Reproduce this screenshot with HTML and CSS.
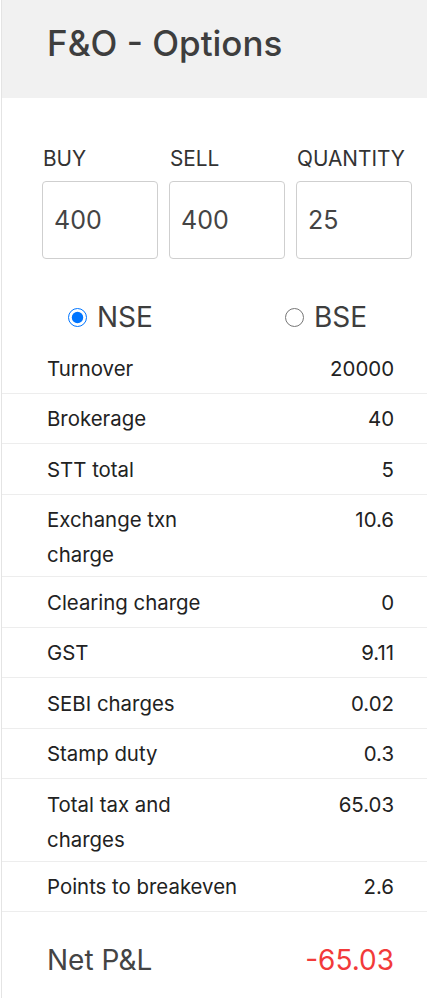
FILE: index.html
```html
<!DOCTYPE html>
<html>
<head>
<meta charset="utf-8">
<link rel="stylesheet" href="styles.css">
</head>
<body>
<div class="page">
  <div class="header"><h1 class="title">F&amp;O - Options</h1></div>
  <div class="inputs">
    <label class="field"><span class="field-label">BUY</span><input class="field-input" type="text" value="400"></label>
    <label class="field"><span class="field-label">SELL</span><input class="field-input" type="text" value="400"></label>
    <label class="field"><span class="field-label">QUANTITY</span><input class="field-input" type="text" value="25"></label>
  </div>
  <div class="exchanges">
    <label class="radio radio-nse"><input type="radio" name="ex" checked><span>NSE</span></label>
    <label class="radio radio-bse"><input type="radio" name="ex"><span>BSE</span></label>
  </div>
  <table class="charges">
    <tr><td class="name">Turnover</td><td class="val">20000</td></tr>
    <tr><td class="name">Brokerage</td><td class="val">40</td></tr>
    <tr><td class="name">STT total</td><td class="val">5</td></tr>
    <tr><td class="name">Exchange txn charge</td><td class="val">10.6</td></tr>
    <tr><td class="name">Clearing charge</td><td class="val">0</td></tr>
    <tr><td class="name">GST</td><td class="val">9.11</td></tr>
    <tr><td class="name">SEBI charges</td><td class="val">0.02</td></tr>
    <tr><td class="name">Stamp duty</td><td class="val">0.3</td></tr>
    <tr><td class="name">Total tax and charges</td><td class="val">65.03</td></tr>
    <tr><td class="name nowrap">Points to breakeven</td><td class="val">2.6</td></tr>
  </table>
  <div class="net">
    <span class="net-label">Net P&amp;L</span>
    <span class="net-val">-65.03</span>
  </div>
</div>
</body>
</html>
```
FILE: styles.css
```css
html, body {
  margin: 0;
  padding: 0;
  background: #fff;
}
body {
  font-family: Inter, "Noto Sans", sans-serif;
}
.page {
  margin-left: 1px;
  border-left: 1px solid #e4e4e4;
  min-height: 998px;
  box-sizing: border-box;
}
.header {
  background: #f1f1f1;
  height: 98px;
  box-sizing: border-box;
  padding: 22px 45px 0;
}
.title {
  margin: 0;
  font-size: 35px;
  line-height: 42px;
  font-weight: 500;
  color: #3e3e3e;
}
.inputs {
  display: grid;
  grid-template-columns: repeat(3, 1fr);
  column-gap: 11px;
  padding: 47px 15px 0 40px;
}
.field {
  display: flex;
  flex-direction: column;
}
.field-label {
  font-size: 20.8px;
  line-height: 28px;
  color: #333;
  padding-left: 1px;
  margin-bottom: 8px;
}
.field-input {
  box-sizing: border-box;
  width: 100%;
  height: 78px;
  border: 1px solid #cfcfcf;
  border-radius: 4px;
  padding: 0 11px;
  font-family: Inter, "Noto Sans", sans-serif;
  font-size: 25px;
  color: #444;
  background: #fff;
  outline: none;
}
.exchanges {
  display: flex;
  padding: 38px 0 0 66px;
  height: 40px;
  align-items: center;
}
.radio {
  display: flex;
  align-items: center;
  font-size: 28px;
  color: #3e3e3e;
}
.radio input {
  width: 19px;
  height: 19px;
  margin: 0 10px 0 0;
}
.radio-bse {
  margin-left: 132px;
}
.charges {
  width: 100%;
  border-collapse: collapse;
  margin-top: 6px;
}
.charges td {
  font-size: 20.4px;
  line-height: 35px;
  color: #222;
  border-bottom: 1px solid #ededed;
  vertical-align: top;
}
.charges .name {
  padding: 7.5px 0 4px 45px;
  width: 160px;
}
.charges .nowrap {
  white-space: nowrap;
}
.charges .val {
  text-align: right;
  padding: 7.5px 33px 7px 0;
}
.net {
  display: flex;
  justify-content: space-between;
  align-items: baseline;
  padding: 31px 33px 0 45px;
}
.net-label {
  font-size: 28px;
  color: #444;
}
.net-val {
  font-size: 28px;
  color: #f23a3a;
}
```
